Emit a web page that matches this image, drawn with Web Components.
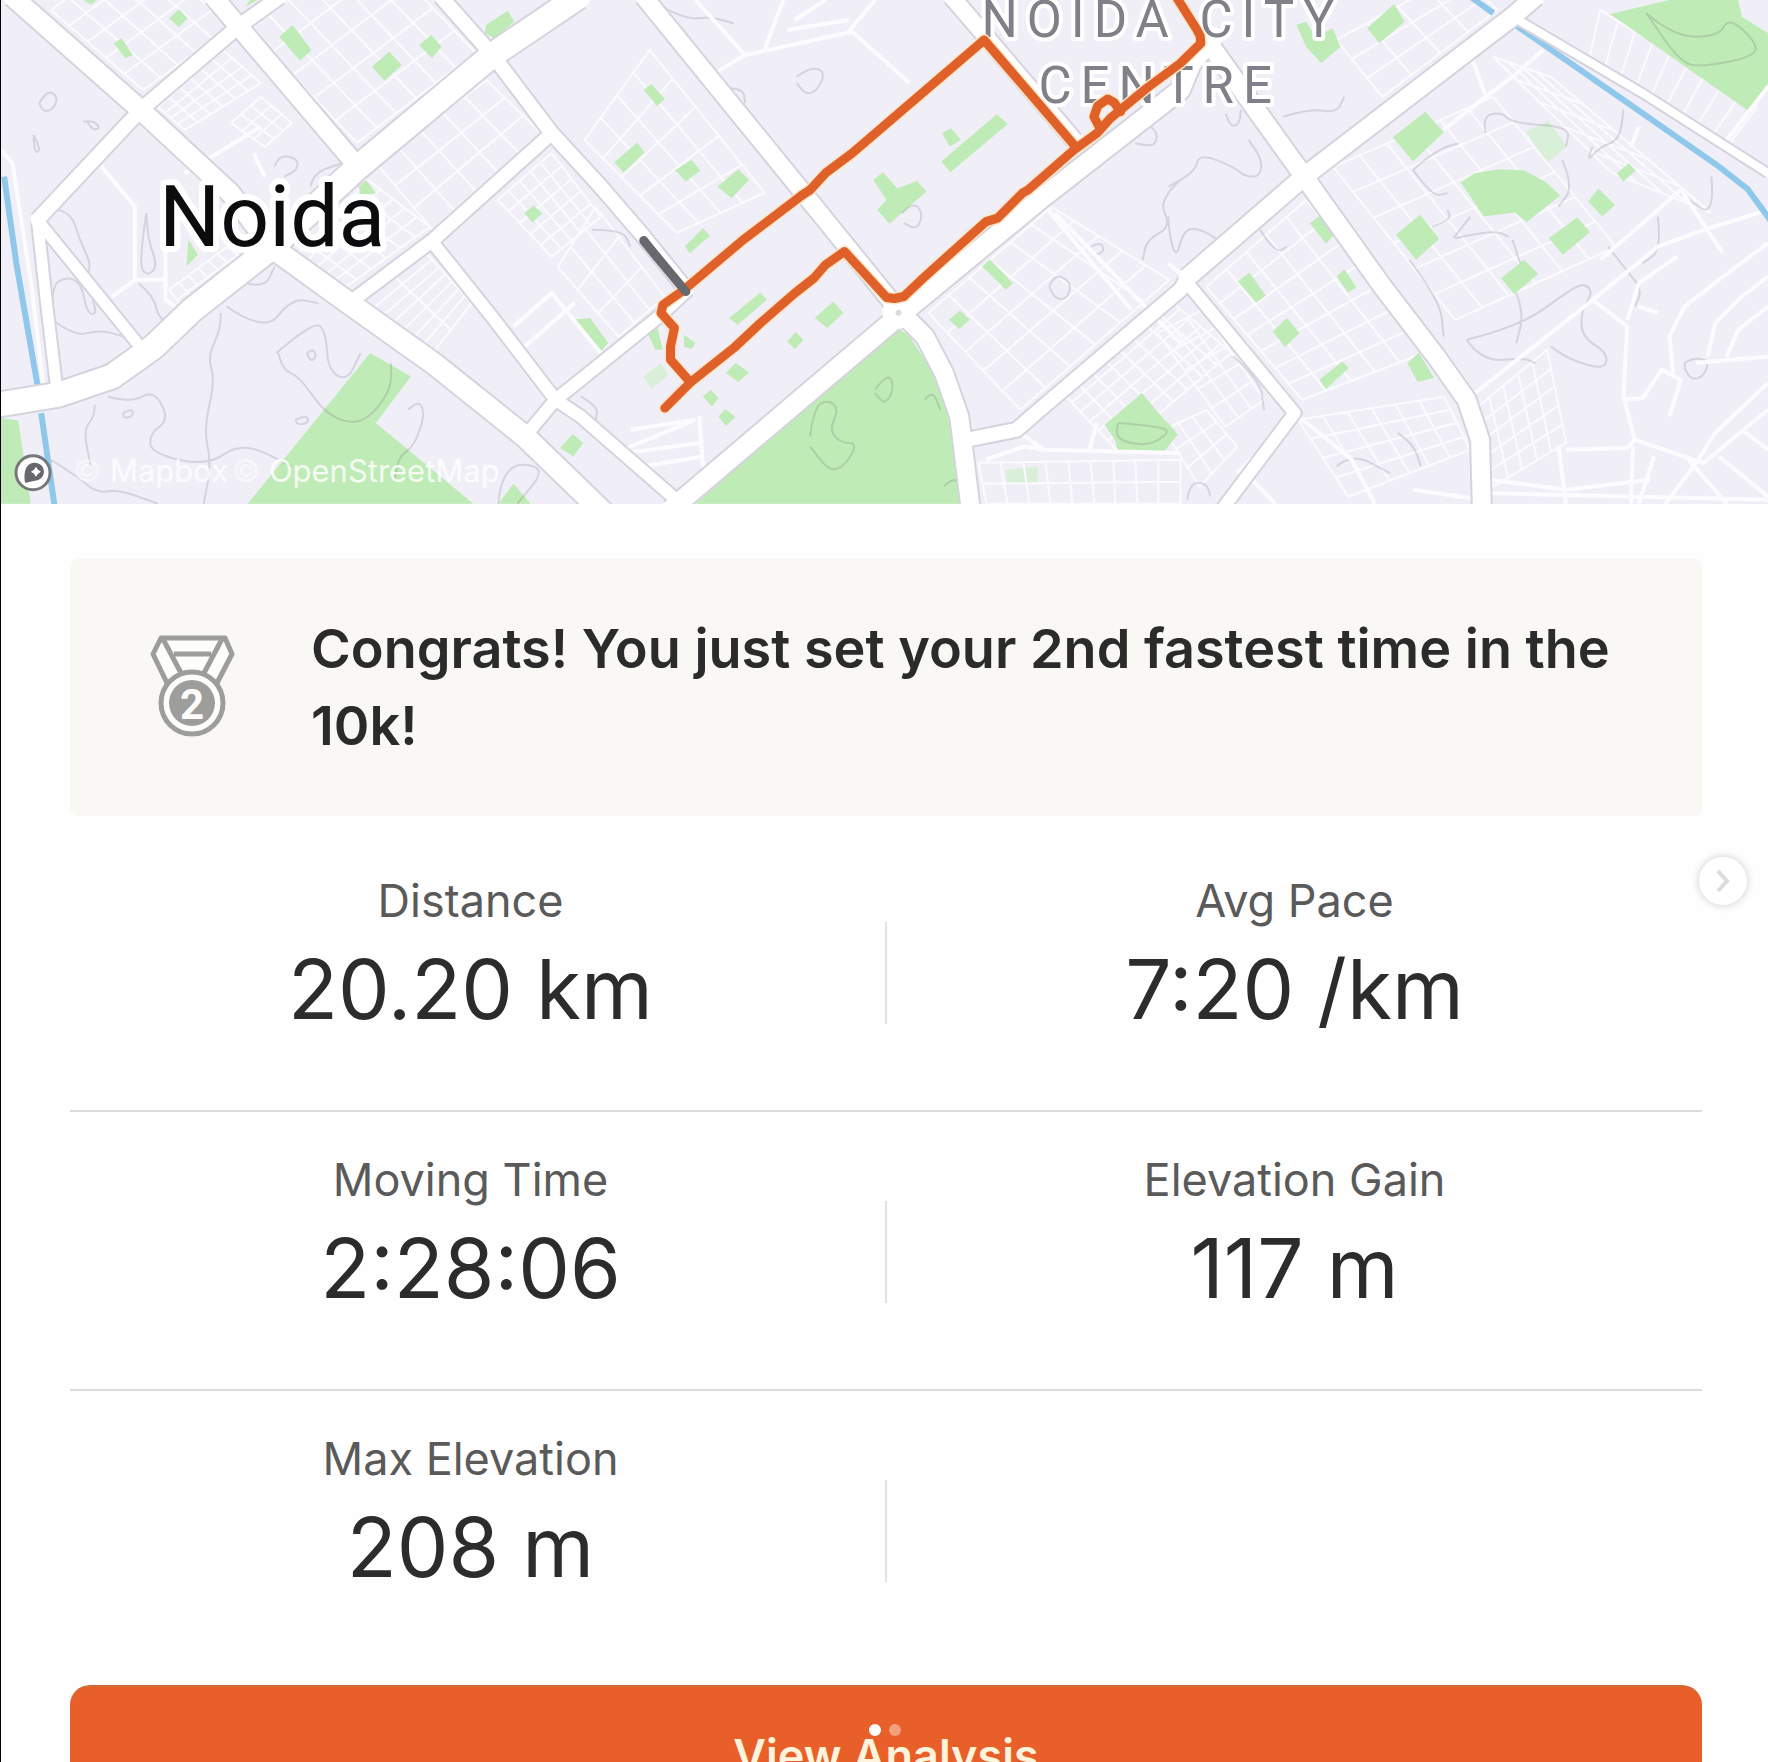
<!DOCTYPE html>
<html lang="en">
<head>
<meta charset="utf-8">
<title>Run summary</title>
<style>
html,body{margin:0;height:100%;overflow:hidden;background:#fefefe}
body{font-family:Inter,"Liberation Sans",sans-serif;color:#2b2b2b}
</style>
</head>
<body>
<activity-slide>
  <route-map slot="map"></route-map>
  <achievement-banner>Congrats! You just set your 2nd fastest time in the 10k!</achievement-banner>
  <stat-row>
    <stat-cell label="Distance">20.20 km</stat-cell>
    <stat-cell label="Avg Pace">7:20 /km</stat-cell>
  </stat-row>
  <stat-row>
    <stat-cell label="Moving Time">2:28:06</stat-cell>
    <stat-cell label="Elevation Gain">117 m</stat-cell>
  </stat-row>
  <stat-row last>
    <stat-cell label="Max Elevation">208 m</stat-cell>
    <stat-cell></stat-cell>
  </stat-row>
  <primary-action>View Analysis</primary-action>
  <slide-next slot="overlay"></slide-next>
  <slide-dots slot="overlay"></slide-dots>
</activity-slide>
<script>
function define(name, html, setup){
  customElements.define(name, class extends HTMLElement{
    constructor(){
      super();
      const root = this.attachShadow({mode:'open'});
      const t = document.createElement('template');
      t.innerHTML = html;
      root.append(t.content.cloneNode(true));
    }
    connectedCallback(){ if(setup) setup(this, this.shadowRoot); }
  });
}

define('activity-slide', `
<style>
:host{display:block;position:relative;height:100%;box-sizing:border-box;border-left:1px solid #000;overflow:hidden}
main{display:flex;flex-direction:column;padding:54px 66px 0 69px}
</style>
<slot name="map"></slot>
<main><slot></slot></main>
<slot name="overlay"></slot>`);

define('achievement-banner', `
<style>
:host{display:flex;align-items:center;gap:76px;padding:52px 72px 52px 80px;margin-bottom:17px;background:#f9f8f5;border-radius:8px}
svg{width:85px;height:103px;flex:none}
p{margin:0;font-size:54px;line-height:77px;font-weight:600}
</style>
<svg viewBox="0 0 85 103" aria-hidden="true">
  <g fill="#fdfdfb" stroke="#9d9d9b" stroke-width="5" stroke-linejoin="round">
    <path d="M11 3H75L82 19L67 48H17L3 19Z"/>
    <path d="M13 4L31 38M72 4L54 38M24 19H61" fill="none"/>
    <circle cx="42" cy="68" r="31"/>
  </g>
  <circle cx="42" cy="68" r="23" fill="#9d9d9b"/>
  <text x="42" y="84" text-anchor="middle" font-family="Roboto,sans-serif" font-weight="700" font-size="42" fill="#fdfdfb">2</text>
</svg>
<p><slot></slot></p>`);

define('stat-row', `
<style>
:host{display:grid;grid-template-columns:1fr 2px 1fr;border-bottom:2px solid #dcdcdc}
:host([last]){border-bottom-color:transparent}
i{background:#e2e2e2;margin:89px 0 86px}
</style>
<slot name="left"></slot><i></i><slot name="right"></slot>`, (el)=>{
  const c = el.querySelectorAll('stat-cell');
  c[0].slot = 'left'; c[1].slot = 'right';
});

define('stat-cell', `
<style>
:host{display:flex;flex-direction:column;align-items:center;gap:13px;padding:40px 0 72px;min-height:165px}
:host([slot=left]){padding-right:14px}
.label{font-size:45px;line-height:56px;color:#5a5a5a}
.value{font-size:82px;line-height:96px;color:#2c2c2c}
</style>
<span class="label"></span><span class="value"><slot></slot></span>`, (el,root)=>{
  root.querySelector('.label').textContent = el.getAttribute('label') || '';
});

define('primary-action', `
<style>
:host{display:block;margin-top:15px}
button{display:block;width:100%;height:140px;border:0;border-top:2px solid #cf6a35;border-radius:20px;background:#e95f29;color:#fff3dc;font:600 45px/56px Inter,"Liberation Sans",sans-serif}
</style>
<button type="button"><slot></slot></button>`);

define('slide-next', `
<style>
:host{position:absolute;top:50%;right:21px;transform:translateY(-50%)}
button{display:grid;place-items:center;width:48px;height:48px;padding:0;border:0;border-radius:50%;background:#fff;box-shadow:0 0 8px #0003}
svg{width:24px;height:24px}
</style>
<button type="button" aria-label="Next"><svg viewBox="0 0 24 24"><path d="M7 2L16 12L7 22" fill="none" stroke="#dcdcdc" stroke-width="4"/></svg></button>`);

define('slide-dots', `
<style>
:host{position:absolute;bottom:26px;left:0;right:0;display:flex;justify-content:center;gap:8px}
i{width:12px;height:12px;border-radius:50%;background:#fff}
i+i{opacity:.4}
</style><i></i><i></i>`);

/* Survey sheets: three 600x504 areas digitised on a finer lattice. A point such as
   b120,30 switches to sheet b; later points stay on the same sheet. */
const SHEET = {a:0, b:580, c:1168};
function pts(s){
  let o = 0;
  return s.trim().split(/\s+/).map(p=>{
    if(p[0] in SHEET){ o = SHEET[p[0]]; p = p.slice(1); }
    const [x,y] = p.split(',').map(Number);
    return [Math.round((o + x*600/1568)*10)/10, Math.round(y/3*10)/10];
  });
}
const line = s => 'M' + pts(s).join('L');
const lines = arr => arr.map(line).join('');
function grid(s, n, m){
  const [A,B,C,D] = pts(s);
  const mix = (p,q,t)=>[Math.round(p[0]+(q[0]-p[0])*t), Math.round(p[1]+(q[1]-p[1])*t)];
  let d = '';
  for(let i=0;i<=n;i++) d += 'M'+mix(A,B,i/n)+'L'+mix(D,C,i/n);
  for(let j=0;j<=m;j++) d += 'M'+mix(A,D,j/m)+'L'+mix(B,C,j/m);
  return d;
}
function smooth(s){
  const p = pts(s); let d = 'M'+p[0];
  for(let i=1;i<p.length-1;i++) d += 'Q'+p[i]+' '+[(p[i][0]+p[i+1][0])/2,(p[i][1]+p[i+1][1])/2];
  return d + 'L' + p[p.length-1];
}

const roads = [
  [19,'a30,-10 365,330 600,580 705,740'],
  [14,'a730,-10 620,80 365,330 95,660'],
  [18,'a555,-10 625,85 925,490'],
  [24,'a1510,-10 1285,165 925,510 705,745 500,930 400,1040 340,1090 290,1130 150,1185 -10,1215'],
  [14,'a1150,-10 1285,165 1440,400 1568,560 b165,710 270,860'],
  [13,'a1440,400 1130,720 910,910'],
  [12,'a1130,730 1290,960 1450,1200 b0,1250 240,1490'],
  [21,'a705,740 910,910 1130,1090 1370,1310 b70,1550'],
  [11,'a95,660 120,920 145,1160'],
  [11,'a95,660 370,1050'],
  [12,'a1370,1310 1450,1200 b0,1140 210,945 280,870'],
  [17,'b165,-10 590,590 830,930'],
  [16,'b970,-10 1060,110 1290,420'],
  [19,'b235,1530 830,950 1200,600 1568,270 c60,190 120,110'],
  [18,'b830,930 900,1010 950,1120 990,1250 1020,1530'],
  [14,'b1010,1320 1140,1290 1200,1230 1568,870 c50,835'],
  [18,'c50,833 355,530 900,50 960,-10'],
  [18,'c100,120 230,330 355,530 560,860 700,1070 780,1200 815,1320 820,1530'],
  [12,'c50,850 330,1240 140,1530'],
  [8,'c900,50 1240,280 1568,520']
];
const streets = [
  'a255,490 350,620 350,840 430,840','a290,890 350,840','a480,520 680,380','a660,460 690,530','a1340,980 1440,880 1568,1060','a1370,1040 1500,910',
  'a0,450 30,490 80,860 110,1150','a430,740 430,900 480,940',
  'b350,220 430,165 710,95 860,250','b480,150 530,0','b700,95 770,0','b430,165 300,0','b560,60 640,0','b540,90 700,60',
  'b110,1350 300,1260','b130,1290 300,1260','b120,1360 310,1330','b160,1400 320,1370','b310,1250 320,1400',
  'b1150,1300 1210,1350 1568,1360','b1330,1350 1350,1270','b1060,1380 1160,1340 1210,1350',
  'b1200,600 1440,930','b1240,640 1568,1030',
  'c780,1200 1110,900 1280,740 1400,690 1568,630','c1110,900 1200,980 1190,1190 1220,1320 1400,1390 1568,1230','c1320,1120 1310,1010 1350,920 1440,840 1568,730',
  'c1190,1200 1240,1195 1290,1110 1340,1140 1310,1250','c1410,1070 1430,970 1500,890 1568,830','c1380,1090 1568,1070','c1460,1070 1490,990 1568,920',
  'c1040,1350 1200,1345 1220,1320','c1230,1512 1270,1370','c1360,1380 1460,1512','c1568,1150 1430,1300 1380,1390 1300,1512',
  'c840,1440 1040,1470 1260,1440','c820,1480 1568,1500','c1020,1340 1040,1512','c1215,1340 1210,1512','c1440,1370 1568,1490','c1500,1290 1568,1350',
  'c780,130 830,290 720,390','c820,300 900,230 980,150','c1440,450 1568,260','c1230,380 1210,440','c1340,570 1130,780','c1340,570 1450,760',
  'c0,790 60,850','c330,1240 480,1380 540,1512','c210,1430 280,1512','c330,1250 180,1420','c640,1470 820,1500','c1230,920 1280,940','c1230,850 1200,960','c1230,850 1330,770'
];
const grids = [
  ['a130,30 370,270 600,80 360,-170',5,5],
  ['a650,90 930,430 1240,160 960,-180',5,6],
  ['a410,320 480,390 680,250 580,150',4,6],
  ['a600,370 690,440 760,370 680,290',3,3],
  ['a980,490 1130,690 1410,400 1270,240',3,5],
  ['a770,770 890,870 1120,680 960,540',5,6],
  ['a950,900 1120,1070 1230,910 1110,760',7,2],
  ['a1300,600 1440,770 1568,650 1440,460',5,5],
  ['a440,870 480,930 650,790 590,740',2,6],
  ['b10,420 250,700 480,580 180,150',5,4],
  ['b-60,800 100,1010 220,890 40,620',3,3],
  ['b910,940 1150,1230 1540,840 1230,620',5,6],
  ['b1260,1180 1400,1350 1700,1060 1540,900',6,8],
  ['b1040,1390 1060,1512 1568,1512 1568,1380',2,9],
  ['c100,860 350,1200 670,1060 360,600',7,5],
  ['c430,500 750,960 1170,740 850,290',6,6],
  ['c850,170 1160,520 1420,640 1000,230',5,4],
  ['c1100,180 1460,440 1540,320 1130,30',9,1],
  ['c340,1260 470,1490 790,1350 720,1190',4,6],
  ['c800,1230 850,1460 1040,1330 990,1050',5,5],
  ['c440,120 560,290 860,30 760,-80',3,4],
  ['c-30,1000 150,1280 250,1200 90,930',5,3],
  ['c-10,1290 80,1460 180,1340 100,1230',3,3]
];
const parks = [
  'a215,0 250,0 235,14','a440,55 465,28 488,55 465,82','a295,130 315,115 345,165 325,175','a728,110 762,75 812,150 782,182','a970,200 1015,155 1048,195 1003,242','a1093,135 1125,105 1152,140 1127,175','a1268,75 1325,32 1342,65 1290,115 1265,100','a640,20 670,0 650,0','a935,560 955,540 980,580 940,585','a490,720 515,765 485,800','a1368,640 1392,617 1415,640 1390,668','a0,1255 45,1262 78,1512 0,1512',
  'a965,1060 1072,1130 980,1270 1235,1512 645,1512','a1340,1452 1385,1512 1300,1512','a1462,1345 1495,1303 1522,1330 1497,1370',
  'b165,270 185,252 220,297 200,318','b88,487 148,428 167,458 112,518','b247,510 290,480 313,512 275,545','b357,560 413,508 440,540 395,595','b272,740 320,685 338,708 285,760','b-25,960 25,955 72,1030 50,1060','b388,955 470,878 487,900 410,975','b612,955 660,905 687,940 645,985','b540,1025 562,997 583,1020 560,1048','b380,1120 405,1090 440,1118 412,1147','b320,1190 340,1170 360,1195 343,1220','b360,1250 378,1228 405,1252 380,1278',
  'b943,485 1088,343 1117,372 967,517','b945,400 968,385 995,420 965,440','b765,540 790,517 828,565 880,543 904,575 808,672 775,630 800,600','b1050,800 1070,778 1130,850 1112,870','b963,960 992,932 1018,960 990,988','b175,1000 200,980 215,1050 195,1050','b270,1005 300,1030 290,1048 270,1040',
  'b1370,1275 1467,1180 1560,1305 1525,1357 1405,1357 1397,1320',
  'b830,985 860,1010 940,1150 975,1330 1003,1512 300,1512',
  'c520,85 590,12 618,65 552,130','c335,75 360,65 385,110 430,85 450,140 400,190 360,140','c587,412 672,335 720,397 640,485','c765,548 800,520 865,508 930,512 985,545 1025,587 937,667 905,638 825,650','c595,705 658,645 708,717 648,780','c370,670 400,645 437,700 412,732','c182,845 212,818 255,888 230,908','c440,830 460,808 492,862 470,878','c273,995 310,955 343,1000 305,1042','c395,1140 455,1085 472,1105 412,1168','c625,1090 655,1058 695,1135 652,1147','c870,835 930,780 967,822 905,883','c995,715 1070,652 1102,697 1032,765','c1098,605 1125,565 1168,615 1135,650','c1172,520 1205,490 1222,512 1190,545',
  'c1155,42 1310,0 1490,0 1500,50 1568,100 1568,250 1520,335','c-40,1240 0,1270 25,1305 -5,1345'
];
const faintParks = ['b165,1130 210,1090 230,1125 185,1168','b1110,1410 1195,1400 1195,1450 1115,1455','c935,395 995,362 1042,440 990,490'];
const contours = [
  'a100,310 120,270 150,290 135,330 110,335 100,310','a215,365 240,360 260,385 240,390 225,365','a85,405 105,450 88,460 85,405','a715,500 725,465 775,475 775,510 740,530','a810,560 815,520 890,490',
  'a150,630 185,640 205,720 235,790 225,830','a380,640 360,790 380,830 410,800 385,720 380,640','a135,960 130,860 170,830 210,850 225,940 250,945 240,900','a135,960 190,1010 260,990 320,1010','a360,850 400,890 410,950 440,970','a590,920 690,1000 760,895 830,910',
  'a575,940 575,990 540,1070 560,1140 530,1290 550,1390 530,1512','a720,1060 820,960 850,1000 855,1110 905,1145 940,1060','a725,1060 735,1110 780,1130 840,1230 900,1270 960,1260 1020,1170 1020,1090','a800,1060 815,1045 825,1070 810,1085 800,1060','a1065,1230 1090,1200 1110,1240 1080,1340 1040,1370 1030,1440','a770,1260 800,1245 805,1270 775,1275 770,1260',
  'a245,1215 245,1250 215,1290 235,1400','a280,1190 340,1210 400,1170 440,1260 390,1300 390,1360 540,1400 630,1325 760,1400','a320,1240 345,1225 345,1250 320,1255 320,1240','a640,850 690,865 715,800','a1300,1512 1310,1390 1430,1400 1350,1512','a130,1380 200,1430 250,1480 310,1470 410,1512',
  'b565,230 600,200 640,215 620,270 590,285 565,250','b385,265 425,265 430,310','b840,640 870,605 895,640 880,690 845,670','b770,1170 805,1115 820,1170 795,1215 770,1180','b600,1310 610,1220 650,1200 675,1230 650,1290 680,1330 725,1330 690,1400 650,1415 600,1340','b1440,410 1480,370 1510,400 1500,440 1450,430','b1568,540 1510,600 1545,680 1480,720 1470,780','b1225,860 1240,820 1285,850 1270,900 1240,895 1225,860','b1335,740 1360,725 1370,755 1345,765','b180,0 270,60 340,50 400,70','b30,690 110,690 130,740','b1405,1270 1520,1280 1540,1300 1480,1340 1400,1320 1405,1270','b900,1200 920,1170 940,1230','b950,1460 980,1425 1000,1490','b0,1190 45,1220 40,1260',
  'c0,560 70,520 80,460 170,500 200,530 240,530 245,480 210,420','c150,340 160,380 185,375 190,330','c300,350 370,325 440,340 460,290','c0,650 0,690 20,780 40,690 80,685 130,720','c240,690 280,760 310,740','c640,510 700,450 760,430','c640,510 690,590 730,580','c830,400 820,350 870,335 900,370 1050,380 1040,440','c690,680 740,660 730,630','c745,715 790,650','c750,715 850,690 890,710','c900,720 920,790','c630,780 710,900 720,1010','c780,1020 920,980 1050,870 1090,850 1110,880 1080,930 1080,1010 1150,1060 1140,1110 1050,1080 1000,1040','c780,1020 820,1085 930,1075 960,1090','c910,880 930,940 910,1030','c1150,740 1190,800 1240,870 1220,920','c1280,650 1290,750 1240,790','c1420,530 1430,660 1340,580','c1110,440 1090,490 1130,440 1180,420 1190,330','c1030,480 1060,560 1020,620','c1350,1090 1370,1075 1415,1080 1400,1130 1370,1140 1350,1110 1350,1090','c1250,40 1320,110 1440,110 1465,50 1540,130 1530,170 1400,200 1340,190 1250,40','c440,1400 480,1360 580,1420','c170,1070 240,1140 250,1230','c50,1500 55,1450 100,1450 110,1490','c600,1300 640,1330 660,1400'
];

define('route-map', `
<style>
:host{display:block}
svg{display:block;width:100%;height:auto;background:#f0eff8}
a{fill:inherit}
</style>
<svg viewBox="0 0 1768 504" role="img" aria-label="Route map of Noida"></svg>`, (el,root)=>{
  const route = 'stroke-linecap="round" stroke-linejoin="round" fill="none"';
  const p1 = line('b220,1225 285,1150 400,1045 470,970 560,880 610,835 640,795 690,755 800,893 820,896 845,890 900,830 1060,665 1090,655 1155,580 1170,570 1290,450 1350,400 1385,355 1480,265 1568,190 c85,130 83,108 75,90 15,-20');
  const p2 = line('b285,1145 235,1080 235,1040 245,985 210,940 215,915 270,870 425,720 580,585 600,570 640,520 710,460 1055,120 1290,435');
  const p3 = line('b1358,385 1342,350 1352,318 1378,297 1395,308 1412,335');
  root.querySelector('svg').innerHTML = `
  <g stroke-linejoin="round" fill="none">
    <path fill="#d9efd8" d="${faintParks.map(p=>line(p)+'Z').join('')}"/>
    <path stroke="#fbfbfe" stroke-width="2" d="${grids.map(g=>grid(...g)).join('')}"/>
    <path fill="#bfebb6" d="${parks.map(p=>line(p)+'Z').join('')}"/>
    <path stroke="#5f5c70" stroke-opacity=".19" stroke-width="2" d="${contours.map(smooth).join('')}"/>
    <path stroke="#fcfcfe" stroke-width="4" d="${lines(streets)}"/>
    <path stroke="#8fc8ea" stroke-width="6" d="${lines(['a8,530 40,790 95,1155','a105,1240 140,1520','c790,-10 850,40','c895,65 1240,340 1440,500 1515,568 1580,670'])}"/>
    ${roads.map(([w,d])=>`<path stroke="#d5d3dd" stroke-width="${w+4}" d="${line(d)}"/>`).join('')}
    ${roads.map(([w,d])=>`<path stroke="#fff" stroke-width="${w}" stroke-linecap="round" d="${line(d)}"/>`).join('')}
  </g>
  <circle cx="898" cy="313" r="16" fill="#fff"/><circle cx="898" cy="313" r="3" fill="#dddbe3"/>
  <g font-family="Roboto,'Liberation Sans',sans-serif" paint-order="stroke" stroke="#fff" stroke-linejoin="round">
    <text x="158" y="246" font-size="86" fill="#0c0c0e" stroke-width="12">Noida</text>
    <g font-size="51" fill="#808188" stroke-width="8" letter-spacing="9">
      <text x="981" y="37">NOIDA CITY</text><text x="1038" y="103">CENTRE</text>
    </g>
  </g>
  <g ${route}>
    <g stroke="#fbe6c8" stroke-width="12"><path d="${p1}"/><path d="${p2}"/><path d="${p3}"/></g>
    <g stroke="#e0602a" stroke-width="9"><path d="${p1}"/><path d="${p2}"/><path d="${p3}"/></g>
    <path stroke="#67696f" stroke-width="9" d="${line('b165,722 195,765 275,875')}"/>
  </g>
  <circle cx="32" cy="473" r="17" fill="#fff" stroke="#77787c" stroke-width="3"/>
  <path d="M24 483C22 470 26 463 34 463A9 9 0 0 1 34 481C31 482 28 482 24 483Z" fill="#67686c"/>
  <path d="M35 467L37 470L40 472L37 474L35 477L33 474L30 472L33 470Z" fill="#fff"/>
  <g font-family="Inter,'Liberation Sans',sans-serif" font-size="31" fill="#fff">
    <a href="#mapbox"><text x="72" y="482"><tspan fill-opacity=".5">©</tspan><tspan fill-opacity=".8"> Mapbox</tspan></text></a>
    <a href="#osm"><text x="231" y="482"><tspan fill-opacity=".5">©</tspan><tspan fill-opacity=".85"> OpenStreetMap</tspan></text></a>
  </g>`;
});
</script>
</body>
</html>
